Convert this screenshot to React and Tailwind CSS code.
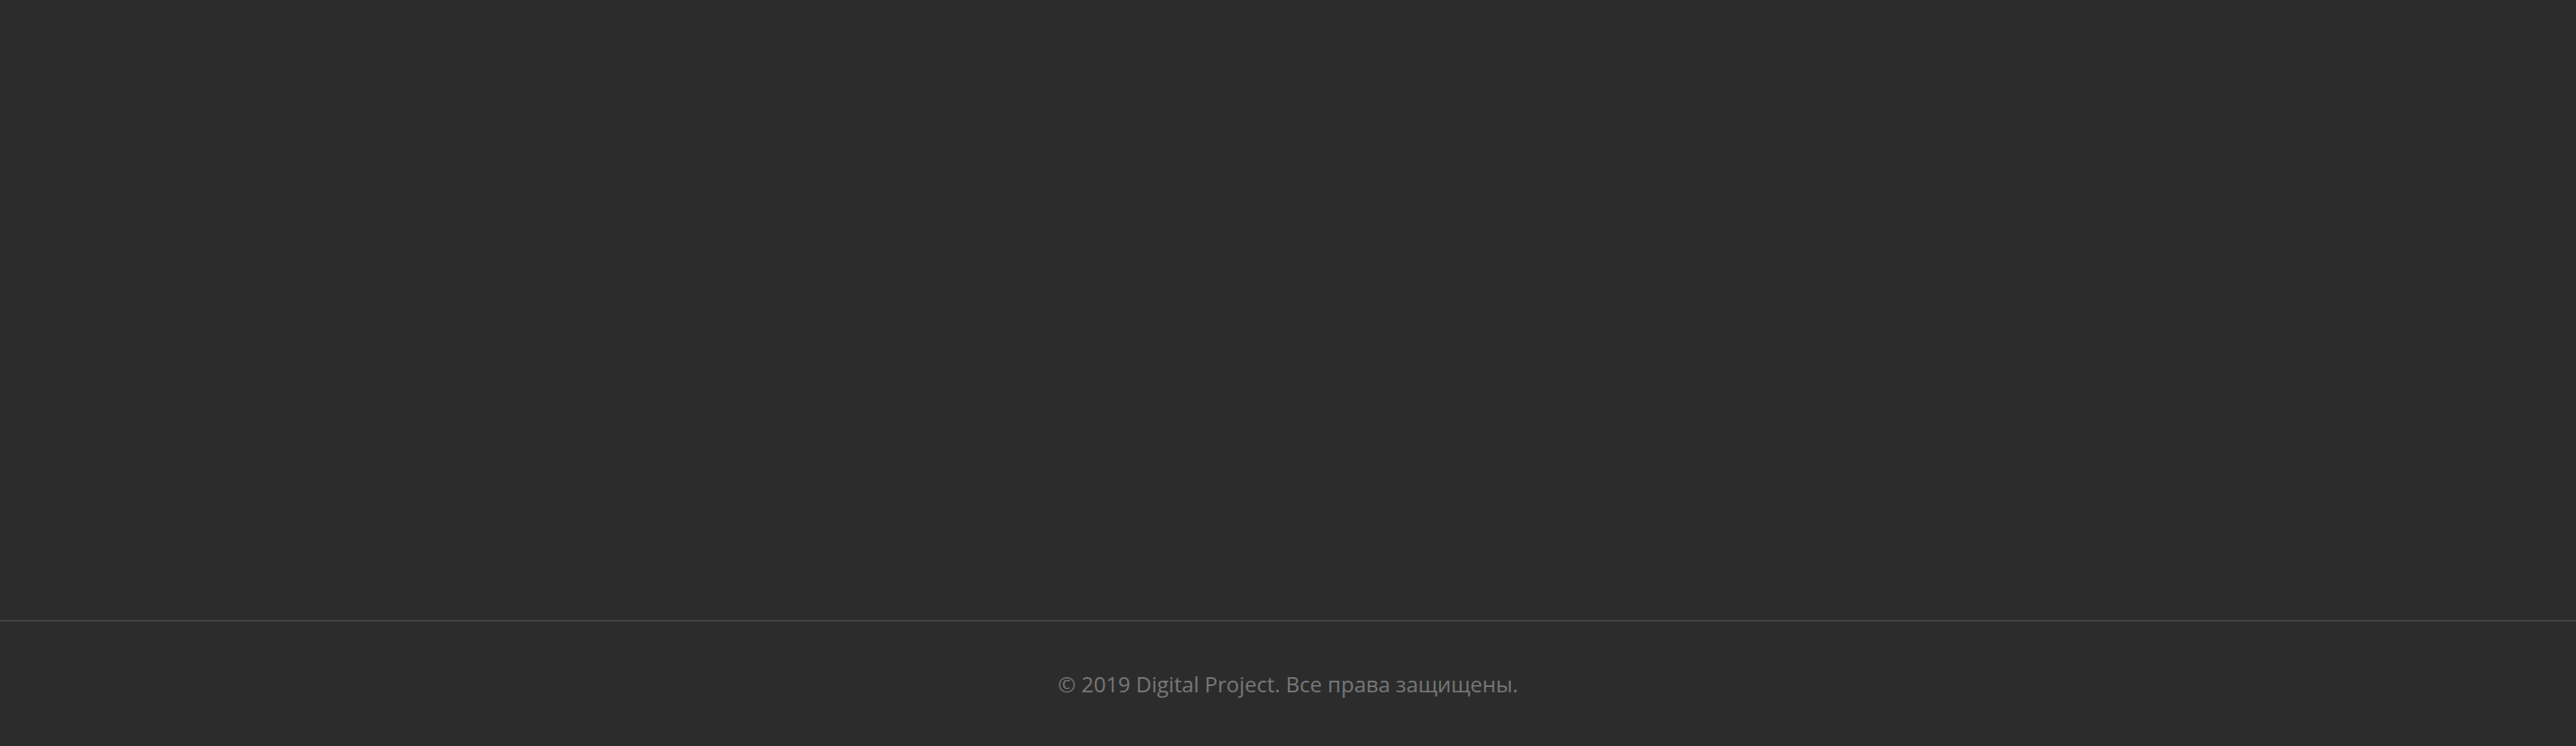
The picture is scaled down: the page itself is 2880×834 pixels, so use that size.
export default function App() {
  return (
    <div className="min-h-screen w-full bg-[#2c2c2c] flex flex-col" style={{ fontFamily: '"Open Sans", "Noto Sans", sans-serif' }}>
      {/* Main content area (empty) */}
      <main className="h-[693px]" />

      {/* Footer */}
      <footer className="border-t-2 border-[#424242] h-[141px] flex items-center justify-center">
        <p className="text-[24px] text-[#777777]">© 2019 Digital Project. Все права защищены.</p>
      </footer>
    </div>
  )
}
